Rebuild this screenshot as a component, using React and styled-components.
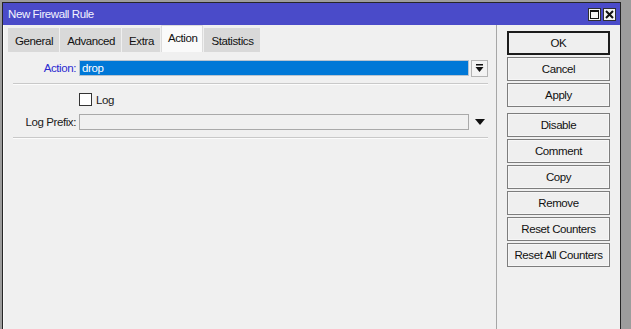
import styled, { createGlobalStyle } from "styled-components"

const GlobalStyle = createGlobalStyle`
html, body {
  margin: 0;
  padding: 0;
  background: #9d9d9d;
  font-family: "Liberation Sans", Arial, sans-serif;
  font-size: 11.5px;
  letter-spacing: -0.4px;
  overflow: hidden;
}
`

const Window = styled.div`
margin: 2px 0 0 2px;
width: 619px;
height: 340px;
border: 1px solid #262626;
border-bottom: none;
box-sizing: border-box;
display: flex;
flex-direction: column;
background: #f0f0f0;
`

const TitleBar = styled.div`
height: 22px;
background: #4a4bc9;
color: #f4f4ff;
display: flex;
align-items: center;
padding: 0 4px 0 5px;
`

const Title = styled.div`
flex: 1;
`

const TitleButtons = styled.div`
display: flex;
gap: 2px;
`

const TitleButton = styled.div`
width: 11px;
height: 11px;
background: #f4f4f4;
border: 1px solid #303030;
display: flex;
align-items: center;
justify-content: center;
`

const Body = styled.div`
flex: 1;
display: flex;
padding-left: 3px;
box-shadow: inset 1px 0 #fbfbfb;
`

const LeftPanel = styled.div`
width: 490px;
display: flex;
flex-direction: column;
border-right: 1px solid #a6a6a6;
`

const Tabs = styled.div`
display: flex;
align-items: flex-end;
gap: 1px;
height: 27px;
padding-left: 2px;
`

const Tab = styled.div`
height: ${p => (p.active ? "27px" : "24px")};
padding: 0 5px 0 6px;
display: flex;
align-items: center;
padding-bottom: ${p => (p.active ? "3px" : "0")};
box-sizing: border-box;
background: ${p => (p.active ? "#fafafa" : "#d9d9d9")};
border: 1px solid ${p => (p.active ? "#dcdcdc" : "#d9d9d9")};
border-bottom: none;
color: #111;
`

const Content = styled.div`
padding: 7px 8px 0 7px;
`

const Row = styled.div`
display: grid;
grid-template-columns: 63px 1fr 16px;
column-gap: 3px;
align-items: center;
height: ${p => p.h || 17}px;
margin-top: ${p => p.mt || 0}px;
margin-bottom: ${p => p.mb || 0}px;
& > :last-child {
  margin-left: -1px;
}
`

const Label = styled.div`
text-align: right;
color: ${p => (p.blue ? "#2a2ad0" : "#1a1a1a")};
white-space: nowrap;
`

const Input = styled.div`
height: 16px;
box-sizing: border-box;
border: 1px solid ${p => (p.selected ? "#b8c4d0" : "#a9a9a9")};
background: ${p => (p.selected ? "#0078d7" : "#f0f0f0")};
color: #fff;
padding-left: 2px;
display: flex;
align-items: center;
`

const DropButton = styled.div`
width: 17px;
height: 17px;
box-sizing: border-box;
border: 1px solid #b4b4b4;
background: #f3f3f3;
display: flex;
align-items: center;
justify-content: center;
`

const Arrow = styled.div`
display: flex;
align-items: center;
justify-content: center;
`

const Separator = styled.div`
height: 1px;
background: #c9c9c9;
box-shadow: 0 1px #fcfcfc;
`

const CheckLine = styled.label`
display: flex;
align-items: center;
gap: 4px;
color: #1a1a1a;
`

const Box = styled.span`
width: 13px;
height: 13px;
box-sizing: border-box;
border: 1px solid #333;
background: #fff;
`

const RightPanel = styled.div`
flex: 1;
padding: 6px 10px 0 10px;
display: flex;
flex-direction: column;
gap: 6px;
`

const ButtonGroup = styled.div`
display: flex;
flex-direction: column;
gap: 2px;
`

const Button = styled.div`
height: 24px;
box-sizing: border-box;
border: ${p => (p.primary ? "2px solid #1c1c1c" : "1px solid #7d7d7d")};
box-shadow: ${p => (p.primary ? "none" : "inset 0 0 0 1px #f6f6f6")};
background: #efefef;
display: flex;
align-items: center;
justify-content: center;
color: #111;
`

const App = () => {
  return (
    <>
      <GlobalStyle />
      <Window>
        <TitleBar>
          <Title>New Firewall Rule</Title>
          <TitleButtons>
            <TitleButton>
              <svg width="9" height="9" viewBox="0 0 9 9">
                <rect x="0.5" y="0.5" width="8" height="8" fill="none" stroke="#111" />
                <line x1="0" y1="1.5" x2="9" y2="1.5" stroke="#111" />
              </svg>
            </TitleButton>
            <TitleButton>
              <svg width="9" height="9" viewBox="0 0 9 9">
                <path d="M1 1 L8 8 M8 1 L1 8" stroke="#111" strokeWidth="2" />
              </svg>
            </TitleButton>
          </TitleButtons>
        </TitleBar>
        <Body>
          <LeftPanel>
            <Tabs>
              <Tab>General</Tab>
              <Tab>Advanced</Tab>
              <Tab>Extra</Tab>
              <Tab active>Action</Tab>
              <Tab>Statistics</Tab>
            </Tabs>
            <Content>
              <Row h={18} mb={6}>
                <Label blue>Action:</Label>
                <Input selected>drop</Input>
                <DropButton>
                  <svg width="9" height="9" viewBox="0 0 9 9">
                    <rect x="1" y="0" width="7" height="1.5" fill="#111" />
                    <path d="M0.5 3 L8.5 3 L4.5 8 Z" fill="#111" />
                  </svg>
                </DropButton>
              </Row>
              <Separator />
              <Row h={13} mt={9} mb={7}>
                <span />
                <CheckLine>
                  <Box />
                  Log
                </CheckLine>
                <span />
              </Row>
              <Row h={17} mb={7}>
                <Label>Log Prefix:</Label>
                <Input />
                <Arrow>
                  <svg width="10" height="6" viewBox="0 0 10 6">
                    <path d="M0 0 L10 0 L5 6 Z" fill="#111" />
                  </svg>
                </Arrow>
              </Row>
              <Separator />
            </Content>
          </LeftPanel>
          <RightPanel>
            <ButtonGroup>
              <Button primary>OK</Button>
              <Button>Cancel</Button>
              <Button>Apply</Button>
            </ButtonGroup>
            <ButtonGroup>
              <Button>Disable</Button>
              <Button>Comment</Button>
              <Button>Copy</Button>
              <Button>Remove</Button>
              <Button>Reset Counters</Button>
              <Button>Reset All Counters</Button>
            </ButtonGroup>
          </RightPanel>
        </Body>
      </Window>
    </>
  )
}

export default App
